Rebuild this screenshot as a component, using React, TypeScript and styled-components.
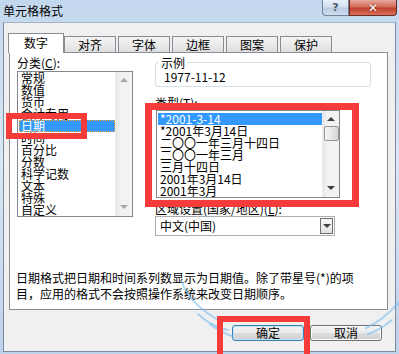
import styled, { createGlobalStyle } from 'styled-components';

const GlobalStyle = createGlobalStyle`
  body {
    margin: 0;
    font-family: 'Noto Sans CJK SC', 'Noto Sans', sans-serif;
    font-size: 12px;
    color: #000;
  }
  * { box-sizing: border-box; }
`;

const Window = styled.div`
  position: relative;
  width: 399px;
  height: 354px;
  overflow: hidden;
  display: flex;
  flex-direction: column;
  background: linear-gradient(180deg, #c3d8ee 0%, #d9e7f6 45%, #bcd2eb 100%);
`;

const TitleBar = styled.div`
  height: 22px;
  display: flex;
  justify-content: space-between;
  align-items: flex-start;
  padding: 0 2px 0 3px;
`;

const Title = styled.span`
  line-height: 22px;
  font-size: 12px;
`;

const CaptionButtons = styled.div`
  display: flex;
`;

const CaptionButton = styled.div<{ $close?: boolean }>`
  width: ${(p) => (p.$close ? 48 : 27)}px;
  height: 16px;
  display: flex;
  align-items: center;
  justify-content: center;
  font-family: 'DejaVu Sans', sans-serif;
  font-weight: bold;
  font-size: ${(p) => (p.$close ? 12 : 11)}px;
  border: 1px solid ${(p) => (p.$close ? '#6b2a22' : '#71839a')};
  border-top: none;
  border-radius: ${(p) => (p.$close ? '0 0 4px 0' : '0 0 0 4px')};
  color: ${(p) => (p.$close ? '#fff' : '#4a5a70')};
  background: ${(p) =>
    p.$close
      ? 'linear-gradient(180deg, #e7a99e 0%, #d46a58 45%, #c2402c 55%, #d9705d 100%)'
      : 'linear-gradient(180deg, #e9f0f8 0%, #d3e0ee 45%, #bccde2 55%, #cfdcec 100%)'};
  text-shadow: ${(p) => (p.$close ? '0 0 2px #5a1a10' : 'none')};
`;

const Body = styled.div`
  flex: 1;
  margin: 0 3px 2px 3px;
  background: #f0f0f0;
  border: 1px solid #7d8a9c;
  border-top-color: #a5b5c8;
  padding: 10px 7px 0 5px;
  display: flex;
  flex-direction: column;
`;

const TabRow = styled.div`
  display: flex;
  align-items: flex-end;
  height: 20px;
  margin: 0 0 -1px -1px;
  position: relative;
  z-index: 1;
`;

const Tab = styled.div<{ $active?: boolean }>`
  width: ${(p) => (p.$active ? 56 : 52)}px;
  height: ${(p) => (p.$active ? 20 : 16)}px;
  margin: ${(p) => (p.$active ? '0' : '0 2px 1px 0')};
  border: 1px solid #898c95;
  border-bottom: none;
  background: ${(p) => (p.$active ? '#fff' : 'linear-gradient(180deg, #f3f3f3 0%, #ebebeb 50%, #dedede 100%)')};
  display: flex;
  align-items: center;
  justify-content: center;
  font-size: 12px;
  padding-bottom: ${(p) => (p.$active ? 2 : 0)}px;
`;

const Panel = styled.div`
  height: 258px;
  background: #fff;
  border: 1px solid #898c95;
  padding: 3px 7px 0 7px;
  display: flex;
  flex-direction: column;
`;

const Columns = styled.div`
  display: grid;
  grid-template-columns: 116px 1fr;
  column-gap: 22px;
  align-items: start;
`;

const Column = styled.div`
  display: flex;
  flex-direction: column;
  align-items: flex-start;
`;

const Label = styled.div<{ $top?: number }>`
  line-height: 14px;
  height: ${(p) => (p.$top === undefined ? 15 : 14)}px;
  margin-top: ${(p) => p.$top ?? 0}px;
  white-space: nowrap;
  u { text-decoration: underline; }
`;

const ListBox = styled.div<{ $w: number; $h: number; $indent?: number }>`
  width: ${(p) => p.$w}px;
  height: ${(p) => p.$h}px;
  margin-left: ${(p) => p.$indent ?? 0}px;
  border: 1px solid #828790;
  background: #fff;
  display: flex;
`;

const Items = styled.div<{ $padTop?: number }>`
  flex: 1;
  padding-top: ${(p) => p.$padTop ?? 0}px;
`;

const Item = styled.div<{ $selected?: boolean; $focus?: boolean }>`
  height: 12px;
  line-height: 12px;
  font-size: 12px;
  margin-left: 1px;
  padding-left: 2px;
  white-space: nowrap;
  background: ${(p) => (p.$selected ? '#3399ff' : 'transparent')};
  color: ${(p) => (p.$selected ? '#fff' : '#000')};
  outline: ${(p) => (p.$focus ? '1px dotted #e8a040' : 'none')};
  outline-offset: -1px;
`;

const ScrollBar = styled.div`
  width: 17px;
  background: linear-gradient(90deg, #e6e6e6 0%, #f2f2f2 30%, #f2f2f2 100%);
  border-left: 1px solid #ececec;
  display: flex;
  flex-direction: column;
  align-items: center;
  padding: 6px 0 7px;
`;

const Arrow = styled.div<{ $down?: boolean; $disabled?: boolean; $inline?: boolean }>`
  width: 0;
  height: 0;
  border-left: 4px solid transparent;
  border-right: 4px solid transparent;
  ${(p) =>
    p.$down
      ? `border-top: 4px solid ${p.$disabled ? '#a8a8a8' : '#404040'};`
      : `border-bottom: 4px solid ${p.$disabled ? '#a8a8a8' : '#404040'};`}
  margin-top: ${(p) => (p.$down && !p.$inline ? 'auto' : '0')};
`;

const Thumb = styled.div`
  width: 15px;
  height: 15px;
  margin-top: 5px;
  border: 1px solid #979797;
  border-radius: 2px;
  background: linear-gradient(90deg, #f4f4f4 0%, #e8e8e8 50%, #d4d4d4 100%);
`;

const Group = styled.fieldset`
  width: 216px;
  margin: 0;
  padding: 0 8px 2px 8px;
  border: 1px solid #d5dfe5;
  border-radius: 3px;
  min-width: 0;
`;

const Legend = styled.legend`
  margin-left: -5px;
  padding: 0 2px;
  line-height: 13px;
  font-size: 12px;
`;

const SampleValue = styled.div`
  line-height: 14px;
  padding-top: 1px;
`;

const Combo = styled.div`
  width: 180px;
  height: 20px;
  border: 1px solid #abadb3;
  background: #fff;
  display: flex;
  align-items: center;
  padding-left: 4px;
`;

const ComboText = styled.span`
  flex: 1;
  line-height: 14px;
`;

const DropButton = styled.div`
  width: 13px;
  height: 16px;
  margin-right: 1px;
  border: 1px solid #6f6f6f;
  background: linear-gradient(180deg, #f6f6f6 0%, #e2e2e2 100%);
  display: flex;
  align-items: center;
  justify-content: center;
`;

const Description = styled.div`
  margin: 34px 0 0 -1px;
  line-height: 16px;
  white-space: nowrap;
  span { display: block; }
`;

const Footer = styled.div`
  display: flex;
  justify-content: flex-end;
  gap: 6px;
  margin-top: 15px;
  padding-right: 6px;
`;

const Button = styled.div<{ $default?: boolean }>`
  width: 72px;
  height: 16px;
  border: 1px solid ${(p) => (p.$default ? '#3c7fb1' : '#707070')};
  border-radius: 3px;
  background: linear-gradient(180deg, #f2f2f2 0%, #ebebeb 50%, #dddddd 51%, #cfcfcf 100%);
  box-shadow: ${(p) => (p.$default ? 'inset 0 0 0 1px #bde4f8' : 'inset 0 0 0 1px #fcfcfc')};
  display: flex;
  align-items: center;
  justify-content: center;
  line-height: 14px;
`;

const Marker = styled.div<{ $x: number; $y: number; $w: number; $h: number; $t: number }>`
  position: absolute;
  left: ${(p) => p.$x}px;
  top: ${(p) => p.$y}px;
  width: ${(p) => p.$w}px;
  height: ${(p) => p.$h}px;
  border: ${(p) => p.$t}px solid #f63b3b;
  pointer-events: none;
`;

const Swoosh = styled.svg`
  position: absolute;
  left: 170px;
  top: 280px;
  pointer-events: none;
`;

const categories = ['常规', '数值', '货币', '会计专用', '日期', '时间', '百分比', '分数', '科学记数', '文本', '特殊', '自定义'];
const types = ['*2001-3-14', '*2001年3月14日', '二〇〇一年三月十四日', '二〇〇一年三月', '三月十四日', '2001年3月14日', '2001年3月'];
const tabs = ['数字', '对齐', '字体', '边框', '图案', '保护'];

export default function App() {
  return (
    <Window>
      <GlobalStyle />
      <TitleBar>
        <Title>单元格格式</Title>
        <CaptionButtons>
          <CaptionButton>?</CaptionButton>
          <CaptionButton $close>✕</CaptionButton>
        </CaptionButtons>
      </TitleBar>
      <Body>
        <TabRow>
          {tabs.map((t, i) => (
            <Tab key={t} $active={i === 0}>
              {t}
            </Tab>
          ))}
        </TabRow>
        <Panel>
          <Columns>
            <Column>
              <Label>
                分类(<u>C</u>):
              </Label>
              <ListBox $w={116} $h={146}>
                <Items>
                  {categories.map((c) => (
                    <Item key={c} $selected={c === '日期'} $focus={c === '日期'}>
                      {c}
                    </Item>
                  ))}
                </Items>
                <ScrollBar>
                  <Arrow $disabled />
                  <Arrow $down $disabled />
                </ScrollBar>
              </ListBox>
            </Column>
            <Column>
              <Group>
                <Legend>示例</Legend>
                <SampleValue>1977-11-12</SampleValue>
              </Group>
              <Label $top={9}>
                类型(<u>T</u>):
              </Label>
              <ListBox $w={184} $h={88} $indent={1}>
                <Items $padTop={2}>
                  {types.map((t, i) => (
                    <Item key={t} $selected={i === 0}>
                      {t}
                    </Item>
                  ))}
                </Items>
                <ScrollBar>
                  <Arrow />
                  <Thumb />
                  <Arrow $down />
                </ScrollBar>
              </ListBox>
              <Label $top={4}>
                区域设置(国家/地区)(<u>L</u>):
              </Label>
              <Combo>
                <ComboText>中文(中国)</ComboText>
                <DropButton>
                  <Arrow $down $inline />
                </DropButton>
              </Combo>
            </Column>
          </Columns>
          <Description>
            <span>日期格式把日期和时间系列数显示为日期值。除了带星号(*)的项</span>
            <span>目，应用的格式不会按照操作系统来改变日期顺序。</span>
          </Description>
        </Panel>
        <Footer>
          <Button $default>确定</Button>
          <Button>取消</Button>
        </Footer>
      </Body>
      <Swoosh width="229" height="74" viewBox="0 0 229 74">
        <g fill="none" stroke="rgba(110,185,240,0.55)" strokeWidth="2" strokeLinecap="round">
          <path d="M12 2 Q18 22 48 40" />
          <path d="M28 34 Q40 46 58 50" />
          <path d="M40 44 Q50 52 62 56" />
          <path d="M229 22 Q214 40 196 48" />
          <path d="M222 40 Q210 50 198 54" />
        </g>
      </Swoosh>
      <Marker $x={6} $y={113} $w={81} $h={26} $t={6} />
      <Marker $x={145} $y={103} $w={214} $h={104} $t={7} />
      <Marker $x={217} $y={316} $w={93} $h={50} $t={6} />
    </Window>
  );
}
